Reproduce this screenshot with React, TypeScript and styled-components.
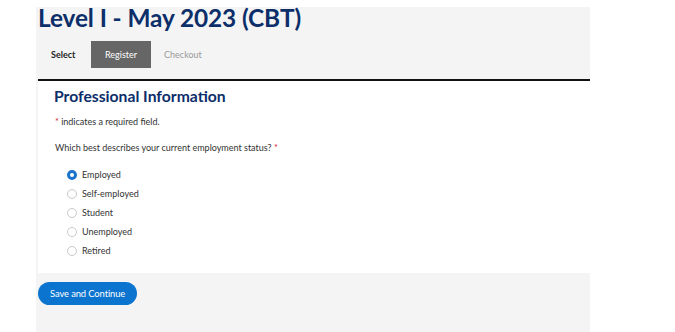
import React from "react";
import styled, { createGlobalStyle } from "styled-components";

const Global = createGlobalStyle`
  html, body { margin: 0; padding: 0; background: #ffffff; }
  body { font-family: Lato, "Open Sans", Arial, sans-serif; }
  * { box-sizing: border-box; }
`;

const Page = styled.div`
  padding-top: 7px;
  padding-left: 36px;
  width: 675px;
`;

const Panel = styled.div`
  width: 554px;
  background: #f4f4f4;
  display: flex;
  flex-direction: column;
`;

const Title = styled.h1`
  margin: -2px 0 0 2px;
  font-family: Lato, sans-serif;
  font-weight: 700;
  font-size: 24.4px;
  line-height: 25px;
  color: #0c2e69;
  letter-spacing: -0.1px;
`;

const Steps = styled.div`
  display: flex;
  align-items: stretch;
  height: 27px;
  margin-top: 11px;
  padding-left: 15px;
`;

const Step = styled.div<{ $state: "done" | "active" | "todo" }>`
  display: flex;
  align-items: center;
  font-size: 9px;
  padding: 0 ${(p) => (p.$state === "done" ? "16px 0 0" : "13.5px")};
  font-weight: ${(p) => (p.$state === "done" ? 700 : 400)};
  color: ${(p) =>
    p.$state === "done" ? "#222" : p.$state === "active" ? "#fff" : "#999"};
  background: ${(p) => (p.$state === "active" ? "#666666" : "transparent")};
`;

const Rule = styled.div`
  margin: 11px 0 0 2px;
  height: 2px;
  background: #111;
`;

const Body = styled.div`
  margin-left: 2px;
  background: #ffffff;
  padding: 6px 16px 0 16px;
  height: 192px;
`;

const Heading = styled.h2`
  margin: 0;
  font-size: 15.7px;
  line-height: 19px;
  font-weight: 700;
  color: #0c2e69;
`;

const Note = styled.p`
  margin: 11px 0 0 1px;
  font-size: 9px;
  line-height: 10px;
  color: #333;
`;

const Star = styled.span`
  color: #d0202a;
`;

const Question = styled.p`
  margin: 16px 0 0 1px;
  font-size: 9px;
  line-height: 10px;
  color: #333;
`;

const Options = styled.div`
  margin: 12px 0 0 13px;
  display: flex;
  flex-direction: column;
`;

const Option = styled.label`
  display: flex;
  align-items: center;
  height: 19px;
  gap: 5px;
  font-size: 9px;
  color: #333;
`;

const Radio = styled.input.attrs({ type: "radio" })`
  appearance: none;
  margin: 0;
  width: 10px;
  height: 10px;
  border-radius: 50%;
  border: 1px solid #c9c9c9;
  background: #fff;
  &:checked {
    border: 3px solid #1a74cc;
    background: #fff;
  }
`;

const Footer = styled.div`
  padding: 8px 0 0 2px;
  height: 70px;
`;

const Button = styled.button`
  height: 23px;
  padding: 0 12px;
  border: none;
  border-radius: 12px;
  background: #0b74cf;
  color: #fff;
  font-family: Lato, sans-serif;
  font-size: 9.4px;
  letter-spacing: -0.1px;
`;

const options = ["Employed", "Self-employed", "Student", "Unemployed", "Retired"];

export default function App() {
  return (
    <Page>
      <Global />
      <Panel>
        <Title>Level I - May 2023 (CBT)</Title>
        <Steps>
          <Step $state="done">Select</Step>
          <Step $state="active">Register</Step>
          <Step $state="todo">Checkout</Step>
        </Steps>
        <Rule />
        <Body>
          <Heading>Professional Information</Heading>
          <Note>
            <Star>*</Star> indicates a required field.
          </Note>
          <Question>
            Which best describes your current employment status? <Star>*</Star>
          </Question>
          <Options>
            {options.map((o, i) => (
              <Option key={o}>
                <Radio name="status" defaultChecked={i === 0} />
                {o}
              </Option>
            ))}
          </Options>
        </Body>
        <Footer>
          <Button>Save and Continue</Button>
        </Footer>
      </Panel>
    </Page>
  );
}
